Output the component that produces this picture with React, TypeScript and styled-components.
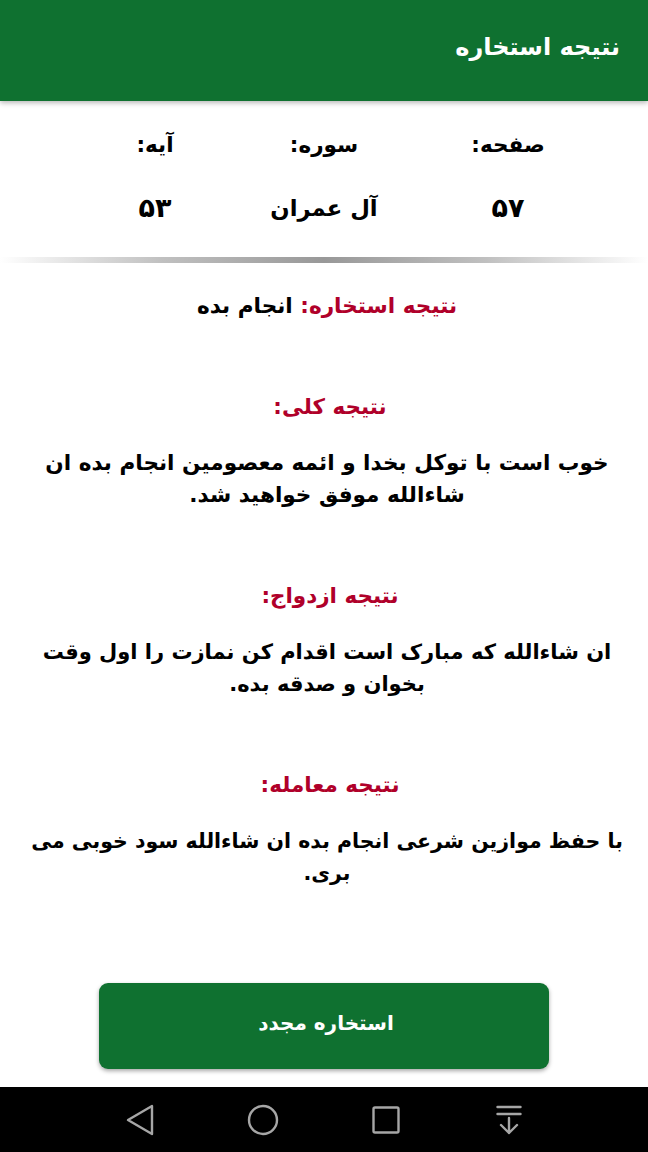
import React from "react";
import styled, { createGlobalStyle } from "styled-components";

const Global = createGlobalStyle`
  html, body { margin: 0; padding: 0; background: #fff; }
  * { box-sizing: border-box; }
`;
const Page = styled.div`
  width: 648px; height: 1152px; display: flex; flex-direction: column;
  font-family: "DejaVu Sans", sans-serif; direction: rtl; overflow: hidden; background: #fff;
`;
const Header = styled.header`
  height: 101px; flex: none; background: #0f7130; color: #fff; display: flex; align-items: center;
  padding: 0 28px 8px; font-size: 24px; font-weight: 700; box-shadow: 0 2px 5px rgba(0,0,0,.28);
`;
const Stats = styled.div`
  display: grid; grid-template-columns: 180px 188px 150px; padding: 27px 50px 0 80px; height: 156px; flex: none; text-align: center;
`;
const StatCol = styled.div`
  display: flex; flex-direction: column; gap: 29px; font-weight: 700; color: #000;
`;
const StatLabel = styled.span`
  font-size: 21.5px; line-height: 34px;
`;
const StatValue = styled.span<{ $digits?: boolean }>`
  font-size: ${(p) => (p.$digits ? "27px" : "22.7px")}; line-height: 34px;
`;
const Divider = styled.div`
  height: 6px; flex: none;
  background: linear-gradient(90deg, rgba(150,150,150,0), #c0c0c0 25%, #989898 50%, #c0c0c0 75%, rgba(150,150,150,0));
`;
const Content = styled.main`
  flex: 1; display: flex; flex-direction: column; align-items: center; text-align: center; padding: 23px 8px 0 14px;
`;
const Summary = styled.div`
  font-size: 21.6px; font-weight: 700; color: #000; line-height: 40px; margin-bottom: 61px;
`;
const Red = styled.span`color: #b0002a;`;
const Title = styled.h2`
  margin: 0 0 20px; padding-left: 6px; font-size: 21.5px; font-weight: 700; color: #b0002a; line-height: 40px;
`;
const Body = styled.p<{ $size: number }>`
  margin: 0 0 65px; font-size: ${(p) => p.$size}px; font-weight: 700; color: #000; line-height: 32px;
`;
const Action = styled.button`
  width: 450px; height: 86px; flex: none; align-self: center; background: #0f7130; color: #fff; border: 0; border-radius: 9px;
  font: 700 20px "DejaVu Sans", sans-serif; padding: 0 0 6px 4px; box-shadow: 0 2px 4px rgba(0,0,0,.35); margin-bottom: 18px;
`;
const Nav = styled.nav`
  height: 65px; flex: none; background: #000; display: flex; direction: ltr; gap: 87px; align-items: center; padding-left: 122px;
`;
const Icon = styled.svg`
  width: 36px; height: 36px; fill: none; stroke: #a6a6a6; stroke-width: 2.4; stroke-linejoin: round; stroke-linecap: round;
`;

export default function App() {
  return (
    <Page>
      <Global />
      <Header>نتیجه استخاره</Header>
      <Stats>
        <StatCol><StatLabel>صفحه:</StatLabel><StatValue $digits>۵۷</StatValue></StatCol>
        <StatCol><StatLabel>سوره:</StatLabel><StatValue>آل عمران</StatValue></StatCol>
        <StatCol><StatLabel>آیه:</StatLabel><StatValue $digits>۵۳</StatValue></StatCol>
      </Stats>
      <Divider />
      <Content>
        <Summary><Red>نتیجه استخاره:</Red> انجام بده</Summary>
        <Title>نتیجه کلی:</Title>
        <Body $size={21.6}>خوب است با توکل بخدا و ائمه معصومین انجام بده ان شاءالله موفق خواهید شد.</Body>
        <Title>نتیجه ازدواج:</Title>
        <Body $size={21}>ان شاءالله که مبارک است اقدام کن نمازت را اول وقت بخوان و صدقه بده.</Body>
        <Title>نتیجه معامله:</Title>
        <Body $size={20.5}>با حفظ موازین شرعی انجام بده ان شاءالله سود خوبی می بری.</Body>
      </Content>
      <Action>استخاره مجدد</Action>
      <Nav>
        <Icon viewBox="0 0 36 36"><path d="M30 4v28L6 18z" /></Icon>
        <Icon viewBox="0 0 36 36"><circle cx="18" cy="18" r="14" /></Icon>
        <Icon viewBox="0 0 36 36"><rect x="5.5" y="5.5" width="25" height="25" rx="1.5" /></Icon>
        <Icon viewBox="0 0 36 36"><path d="M6.5 5h23M6.5 12h23M18 16v15M10 23l8 8 8-8" /></Icon>
      </Nav>
    </Page>
  );
}
